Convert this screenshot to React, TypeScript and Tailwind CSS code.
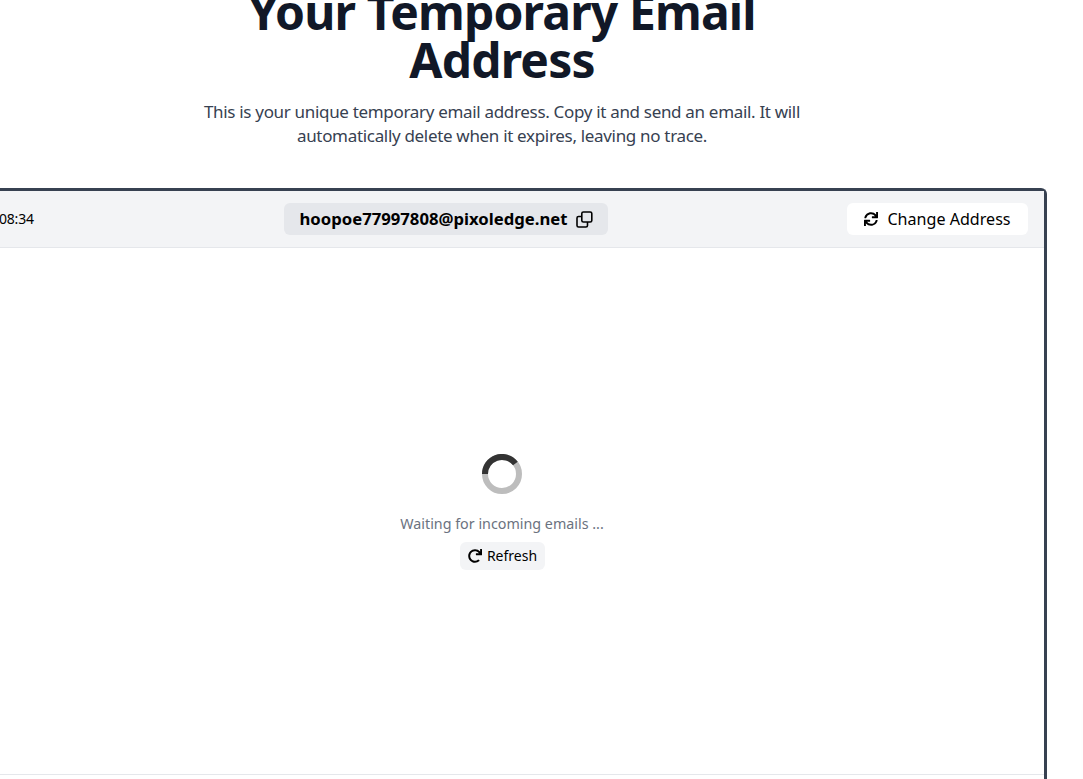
import { FaRedo, FaSync } from "react-icons/fa";

function CopyIcon() {
  return (
    <svg width="17" height="17" viewBox="0 0 17 17" fill="none" stroke="currentColor" strokeWidth="1.6">
      <rect x="5.8" y="1" width="10" height="10" rx="1.6" />
      <path d="M5.8 5.5H2.6A1.6 1.6 0 0 0 1 7.1v7.3A1.6 1.6 0 0 0 2.6 16h7.3a1.6 1.6 0 0 0 1.6-1.6V11" />
    </svg>
  );
}

function Spinner() {
  return (
    <svg width="40" height="40" viewBox="0 0 40 40" fill="none" strokeWidth="6">
      <circle cx="20" cy="20" r="17" stroke="#bdbdbd" />
      <path d="M3 20A17 17 0 0 1 33.4 9.5" stroke="#333333" />
    </svg>
  );
}

export default function App() {
  return (
    <div className="relative h-[779px] w-[1083px] overflow-hidden bg-white font-['Noto_Sans','Open_Sans',sans-serif]">
      <div className="-mt-[12px] -ml-[43px] flex w-[1090px] flex-col items-center">
        <h1 className="w-[600px] text-center text-[48px] leading-[48px] font-bold tracking-[-0.85px] text-[#111827]">Your Temporary Email Address</h1>
        <p className="mt-[16px] w-[640px] text-center text-[17px] leading-[24px] tracking-[-0.32px] text-[#374151]">
          This is your unique temporary email address. Copy it and send an email. It will automatically delete when it expires, leaving no trace.
        </p>
        <div className="mt-[40px] h-[700px] w-full rounded-t-[6px] border-x-[3px] border-t-[3px] border-[#374151]">
          <div className="flex h-[57px] items-center justify-between border-b border-[#e5e7eb] bg-[#f3f4f6] px-[16px]">
            <div className="w-[69px] pb-[2px] pl-[23px] text-[14px] tracking-[-0.2px] text-black">08:34</div>
            <div className="flex h-[32px] w-[324px] items-center justify-center gap-[8px] rounded-[6px] bg-[#e5e7eb] text-[16.7px] font-bold text-black">
              hoopoe77997808@pixoledge.net
              <CopyIcon />
            </div>
            <div className="flex h-[32px] w-[181px] items-center justify-center gap-[9px] rounded-[6px] bg-white text-[16.1px] text-black">
              <FaSync size={14} />
              Change Address
            </div>
          </div>
          <div className="flex h-[527px] flex-col items-center border-b border-[#e5e7eb] pt-[206px]">
            <Spinner />
            <p className="mt-[18px] text-[14.3px] leading-[24px] text-[#6b7280]">Waiting for incoming emails ...</p>
            <div className="mt-[6px] flex h-[28px] w-[85px] items-center justify-center gap-[5px] rounded-[6px] bg-[#f3f4f6] pb-[1px] pl-[1px] text-[14px] text-black">
              <FaRedo size={14} />
              Refresh
            </div>
          </div>
        </div>
      </div>
      <div className="absolute top-[700px] left-[1092px] h-[120px] w-[60px] shadow-[0_0_14px_rgba(0,0,0,0.06)]" />
    </div>
  );
}
